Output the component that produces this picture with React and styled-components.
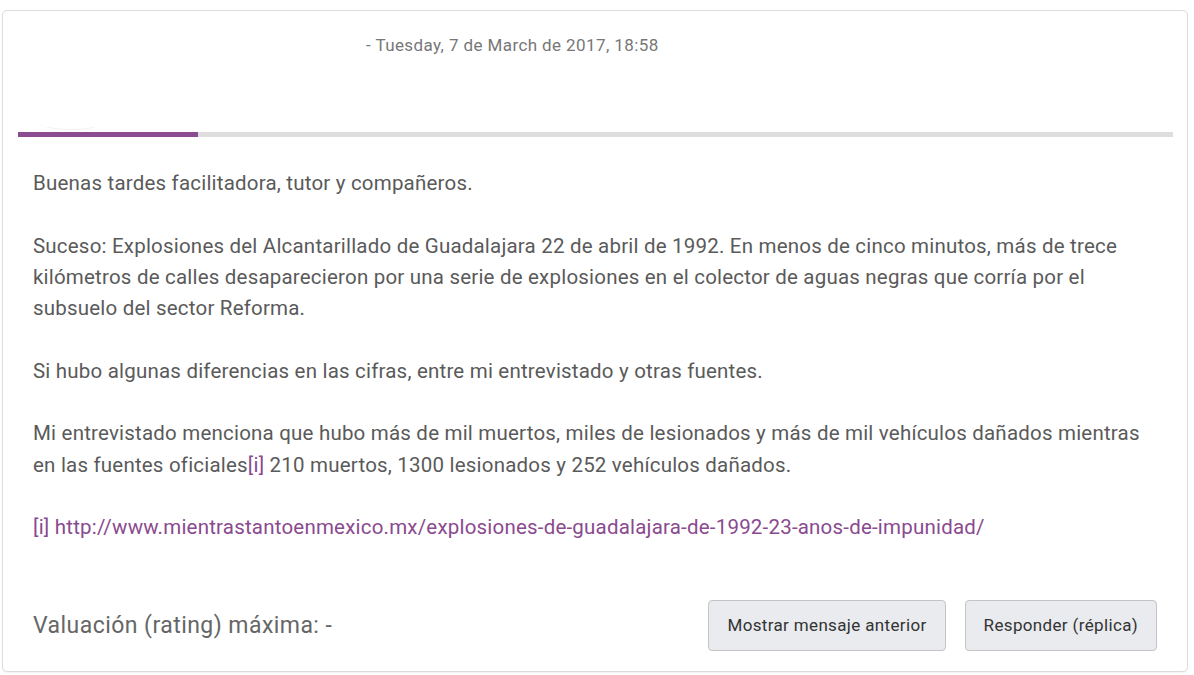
import React from "react";
import styled, { createGlobalStyle } from "styled-components";

const GlobalStyle = createGlobalStyle`
  body {
    margin: 0;
    background: #fff;
    font-family: Roboto, "Liberation Sans", sans-serif;
  }
`;

const Page = styled("div")`
  padding: 10px 6px 4px 2px;
`;

const Card = styled("article")`
  border: 1px solid #dcdcdc;
  border-radius: 5px;
  box-shadow: 0 1px 2px rgba(0, 0, 0, 0.06);
  background: #fff;
`;

const Header = styled("header")`
  display: flex;
  height: 121px;
  padding: 0 16px;
`;

const Avatar = styled("div")`
  width: 347px;
  flex-shrink: 0;
  display: flex;
  align-items: flex-end;
  padding-left: 20px;
  box-sizing: border-box;
`;

const AvatarArc = styled("div")`
  width: 64px;
  height: 14px;
  border-bottom: 1px solid #f2f2f2;
  border-radius: 0 0 50% 50%;
  margin-bottom: 2px;
`;

const DateLine = styled("div")`
  padding-top: 24px;
  font-size: 17px;
  letter-spacing: 0.4px;
  color: #777;
`;

const Progress = styled("div")`
  height: 5px;
  margin: 0 14px 0 15px;
  background: #dedede;
`;

const ProgressFill = styled("div")`
  height: 100%;
  background: #8c4c91;
`;

const Body = styled("div")`
  padding: 31px 30px 0 30px;
  font-size: 20.5px;
  letter-spacing: 0.2px;
  line-height: 31.3px;
  color: #5a5a5a;
`;

const Paragraph = styled("p")`
  margin: 0 0 31.3px;
  &:last-child {
    margin-bottom: 0;
  }
`;

const Ref = styled("a")`
  color: #8a4a8f;
  text-decoration: none;
`;

const Footer = styled("footer")`
  display: flex;
  align-items: center;
  justify-content: space-between;
  padding: 56px 30px 20px 30px;
`;

const Rating = styled("div")`
  font-size: 23px;
  letter-spacing: 0.45px;
  color: #666;
`;

const Actions = styled("div")`
  display: flex;
  gap: 19px;
`;

const Button = styled("button")`
  height: 51px;
  padding: 0 18px;
  font-family: Roboto, "Liberation Sans", sans-serif;
  font-size: 17px;
  letter-spacing: 0.35px;
  color: #333;
  background: #e9ebee;
  border: 1px solid #c4c4c4;
  border-radius: 4px;
`;

const url = "http://www.mientrastantoenmexico.mx/explosiones-de-guadalajara-de-1992-23-anos-de-impunidad/";

export default function App() {
  return (
    <Page>
      <GlobalStyle />
      <Card>
        <Header>
          <Avatar>
            <AvatarArc />
          </Avatar>
          <DateLine>- Tuesday, 7 de March de 2017, 18:58</DateLine>
        </Header>
        <Progress>
          <ProgressFill style={{ width: "180px" }} />
        </Progress>
        <Body>
          <Paragraph>Buenas tardes facilitadora, tutor y compañeros.</Paragraph>
          <Paragraph>
            Suceso: Explosiones del Alcantarillado de Guadalajara 22 de abril de 1992. En menos de cinco
            minutos, más de trece kilómetros de calles desaparecieron por una serie de explosiones en el
            colector de aguas negras que corría por el subsuelo del sector Reforma.
          </Paragraph>
          <Paragraph>Si hubo algunas diferencias en las cifras, entre mi entrevistado y otras fuentes.</Paragraph>
          <Paragraph>
            Mi entrevistado menciona que hubo más de mil muertos, miles de lesionados y más de mil vehículos
            dañados mientras en las fuentes oficiales<Ref href="#ref-i">[i]</Ref> 210 muertos, 1300
            lesionados y 252 vehículos dañados.
          </Paragraph>
          <Paragraph>
            <Ref href="#ref-i">[i]</Ref> <Ref href={url}>{url}</Ref>
          </Paragraph>
        </Body>
        <Footer>
          <Rating>Valuación (rating) máxima: -</Rating>
          <Actions>
            <Button>Mostrar mensaje anterior</Button>
            <Button>Responder (réplica)</Button>
          </Actions>
        </Footer>
      </Card>
    </Page>
  );
}
